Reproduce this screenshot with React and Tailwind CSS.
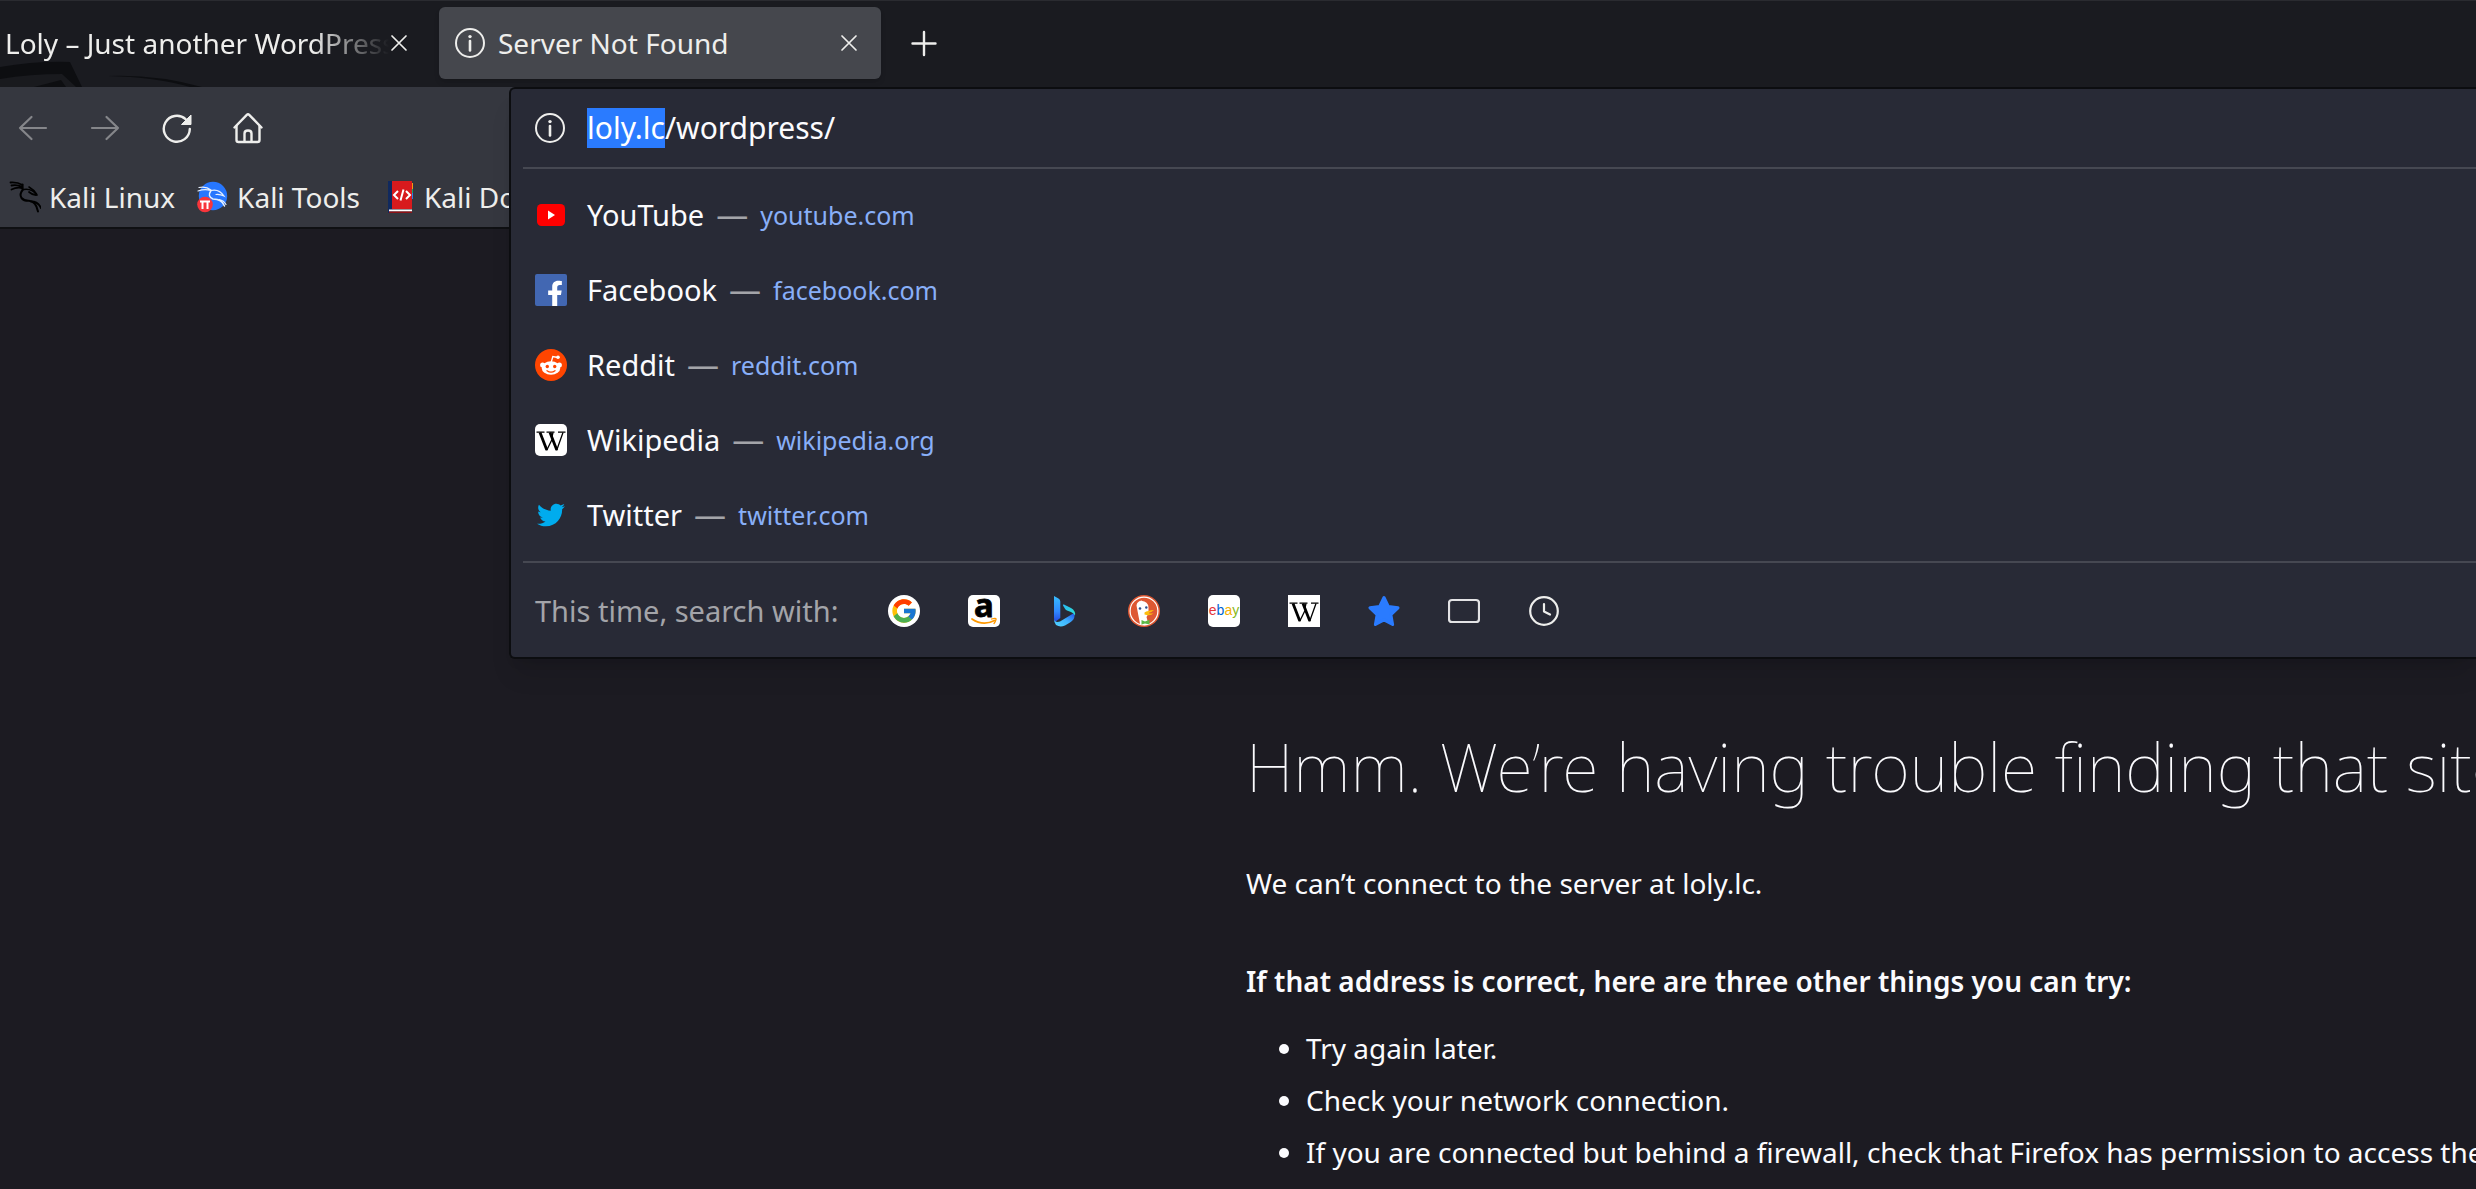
import React, { useEffect, useRef } from "react";
import { FcGoogle } from "react-icons/fc";
import { FaFacebookF, FaTwitter } from "react-icons/fa";

function InfoIcon() {
  return (
    <svg className="size-8 shrink-0" viewBox="0 0 32 32" fill="none" aria-hidden="true">
      <circle cx="16" cy="16" r="14" stroke="#eeeeec" strokeWidth="2" />
      <path d="M16 14v9.500" stroke="#eeeeec" strokeWidth="2.600" strokeLinecap="round" />
      <circle cx="16" cy="9.600" r="1.700" fill="#eeeeec" />
    </svg>
  );
}

function CloseIcon() {
  return (
    <svg className="size-5" viewBox="0 0 20 20" fill="none" stroke="#eeeeec" strokeWidth="1.700" strokeLinecap="round" aria-hidden="true">
      <path d="M3 3l14 14M17 3L3 17" />
    </svg>
  );
}

function PlusIcon() {
  return (
    <svg className="size-8" viewBox="0 0 32 32" fill="none" stroke="#eeeeec" strokeWidth="2.400" strokeLinecap="round" aria-hidden="true">
      <path d="M16 5v23M4.500 16.500h23" />
    </svg>
  );
}

function ArrowIcon({ forward }) {
  return (
    <svg className="size-8" viewBox="0 0 32 32" fill="none" stroke="#85868a" strokeWidth="2.200" strokeLinecap="round" strokeLinejoin="round" aria-hidden="true">
      {forward ? <path d="M3 16h26M17.500 5L29 16L17.500 27" /> : <path d="M29 16H3M14.500 5L3 16l11.500 11" />}
    </svg>
  );
}

function ReloadIcon() {
  return (
    <svg className="size-8" viewBox="0 0 32 32" fill="none" aria-hidden="true">
      <path d="M28.800 17a13 13 0 1 1-4.200-9.800" stroke="#eeeeec" strokeWidth="2.400" strokeLinecap="round" />
      <path d="M30 3v9.500h-9.500z" fill="#eeeeec" stroke="#eeeeec" strokeWidth="1" strokeLinejoin="round" />
    </svg>
  );
}

function HomeIcon() {
  return (
    <svg className="size-8" viewBox="0 0 32 32" fill="none" stroke="#eeeeec" strokeWidth="2.400" strokeLinecap="round" strokeLinejoin="round" aria-hidden="true">
      <path d="M1.500 15.500L13.800 2.800q1.200-1.200 2.400 0L28.500 15.500" />
      <path d="M3.500 14v14q0 2 2 2h19q2 0 2-2V14" />
      <path d="M11.500 29.500v-8q0-3 3.500-3t3.500 3v8" />
    </svg>
  );
}

function KaliLinuxIcon() {
  return (
    <svg className="size-8 shrink-0" viewBox="0 0 32 32" fill="none" stroke="#000" strokeLinecap="round" strokeLinejoin="round" aria-hidden="true">
      <path d="M1.500 1.500q7-.5 12 2.500M2.500 4.500q6-1 11 1.500M2.500 8.500q5-2.500 10.500-1.500" strokeWidth="1.800" />
      <path d="M13.500 3.500v4.500" strokeWidth="2" />
      <path d="M14 8.500q-4 4.500-1.500 8.500q2.500 3 7.500 2.800q7 .5 9 10.700" strokeWidth="2" />
      <path d="M14.500 8.500q8-1.500 13.500 5.500q-4 .5-8-3" strokeWidth="1.700" />
      <path d="M20 6q5 3 7.500 7" strokeWidth="1.500" />
      <path d="M22 20.500q7 0 10 6.500" strokeWidth="1.800" />
    </svg>
  );
}

function KaliToolsIcon() {
  return (
    <svg className="size-8 shrink-0" viewBox="0 0 32 32" aria-hidden="true">
      <circle cx="16" cy="15" r="14.200" fill="#2777ff" />
      <g fill="none" stroke="#e6f0ff" strokeLinecap="round">
        <path d="M2 6.500q7-1.500 12 2.500M1 10q7-2.500 12.500-.5" strokeWidth="1.200" />
        <path d="M14 9.500q-4 6 2 8.500q9 0 11.500 7" strokeWidth="1.500" />
        <path d="M14 9.500q8-2 13 5.500q-4-2-8-1.500M22 18.500q5 1 7 5" strokeWidth="1.200" />
      </g>
      <circle cx="8" cy="23.500" r="7.800" fill="#f8353b" />
      <path d="M3 20.500h10M5.500 20.500v7.500M10.500 20.500v7.500" stroke="#fff" strokeWidth="2" fill="none" />
    </svg>
  );
}

function KaliDocsIcon() {
  return (
    <svg className="size-8 shrink-0" viewBox="0 0 32 32" aria-hidden="true">
      <path d="M26 2h3v6h-3z" fill="#f59a13" />
      <path d="M26 8h3v4h-3z" fill="#15a56a" />
      <path d="M26 12h3v6h-3z" fill="#2b7de9" />
      <path d="M4 0h5v32H4z" fill="#10295e" />
      <path d="M8 0h20v28H8z" fill="#d81a1d" />
      <path d="M5 28.500h23v2H5z" fill="#fff" />
      <path d="M5 30.500h23V32H5z" fill="#8c1015" />
      <path d="M14 10l-4 4l4 4M22 10l4 4l-4 4M19.500 8.500l-3 11" fill="none" stroke="#fff" strokeWidth="2" />
    </svg>
  );
}

function YouTubeIcon() {
  return (
    <svg className="size-8" viewBox="0 0 32 32" aria-hidden="true">
      <rect x="2" y="5" width="28" height="22" rx="4.500" fill="#f00" />
      <path d="M13 11.500v9l7-4.500z" fill="#fff" />
    </svg>
  );
}

function FacebookIcon() {
  return (
    <span className="flex size-8 items-end justify-end overflow-hidden rounded-xs bg-[#4267b2] pr-1">
      <FaFacebookF className="-mb-px h-[27px] w-4 text-white" aria-hidden="true" />
    </span>
  );
}

function RedditIcon() {
  return (
    <svg className="size-8" viewBox="0 0 32 32" aria-hidden="true">
      <circle cx="16" cy="16" r="16" fill="#ff4500" />
      <path d="M16.300 13l1.500-5.500l5 1" fill="none" stroke="#fff" strokeWidth="1.300" />
      <circle cx="23" cy="8.200" r="1.800" fill="#fff" />
      <circle cx="7.600" cy="16" r="2.500" fill="#fff" />
      <circle cx="24.400" cy="16" r="2.500" fill="#fff" />
      <ellipse cx="16" cy="19" rx="9.300" ry="6.700" fill="#fff" />
      <circle cx="12.300" cy="17.500" r="1.700" fill="#ff4500" />
      <circle cx="19.700" cy="17.500" r="1.700" fill="#ff4500" />
      <path d="M12 21.700q4 2.800 8 0" fill="none" stroke="#ff4500" strokeWidth="1.200" strokeLinecap="round" />
    </svg>
  );
}

function WikipediaIcon({ rounded }) {
  return (
    <svg className="size-8" viewBox="0 0 32 32" aria-hidden="true">
      <rect width="32" height="32" rx={rounded ? 5 : 0} fill="#fff" />
      <g fill="none" stroke="#000">
        <path d="M1.500 8.200h8M11.500 8.200h8M23 8.200h7.500" strokeWidth="1.200" />
        <path d="M5 8.500l6.800 17.500M15 8.500l6.800 17.500" strokeWidth="2.800" />
        <path d="M11.600 26.500L17 15.500M21.600 26.500L28 8.500M16.500 14.500L18 8.500" strokeWidth="1.300" />
      </g>
    </svg>
  );
}

function TwitterIcon() {
  return (
    <span className="flex size-8 items-center justify-center">
      <FaTwitter className="size-7 text-[#00acee]" aria-hidden="true" />
    </span>
  );
}

function GoogleIcon() {
  return (
    <span className="flex size-8 items-center justify-center rounded-full bg-white">
      <FcGoogle className="size-7" aria-hidden="true" />
    </span>
  );
}

function AmazonIcon() {
  return (
    <svg className="size-8" viewBox="0 0 32 32" aria-hidden="true">
      <rect width="32" height="32" rx="5" fill="#fff" />
      <text x="16" y="22" textAnchor="middle" stroke="#000" strokeWidth="0.800" className="font-['Noto_Sans',sans-serif] text-[33px] leading-none font-bold">a</text>
      <path d="M4 24q11 7.500 22.500 1.500" fill="none" stroke="#ff9900" strokeWidth="1.800" strokeLinecap="round" />
      <path d="M23.500 24q5-1.500 4.500.5t-2 4" fill="none" stroke="#ff9900" strokeWidth="1.300" strokeLinecap="round" />
    </svg>
  );
}

function BingIcon() {
  return (
    <svg className="size-8" viewBox="0 0 32 32" aria-hidden="true">
      <defs>
        <linearGradient id="bingStem" x1="0" y1="0" x2="0" y2="1">
          <stop offset="0" stopColor="#37bdff" />
          <stop offset="0.600" stopColor="#3088ff" />
          <stop offset="1" stopColor="#2447e0" />
        </linearGradient>
        <linearGradient id="bingBase" x1="0" y1="1" x2="1" y2="0">
          <stop offset="0" stopColor="#52d6ff" />
          <stop offset="0.500" stopColor="#3fb4ff" />
          <stop offset="1" stopColor="#2052e8" />
        </linearGradient>
        <linearGradient id="bingBowl" x1="0" y1="0" x2="1" y2="1">
          <stop offset="0" stopColor="#29b6f6" />
          <stop offset="1" stopColor="#2ee6d0" />
        </linearGradient>
      </defs>
      <path d="M6 1l4.500 2.500q1.800 1 1.800 3V23L7 27q-1-2-1-4z" fill="url(#bingStem)" />
      <path d="M6 24q1 4 6 2.500L26 18q2 6-4 9.500l-5 3q-5 2-9-.5q-2-2.500-2-6z" fill="url(#bingBase)" />
      <path d="M15 10.500q-.5-1.500 1-1l7 3.500q5 3 4 7.500q-1-2.500-4-3.500l-4-1.500q-1.500-.5-2-1.800z" fill="url(#bingBowl)" />
    </svg>
  );
}

function DuckIcon() {
  return (
    <svg className="size-8" viewBox="0 0 32 32" aria-hidden="true">
      <circle cx="16" cy="16" r="16" fill="#de5833" />
      <circle cx="16" cy="16" r="13.900" fill="none" stroke="#fff" strokeWidth="1.200" />
      <path d="M8.500 10.500q.5-4.500 5-4.500q6.500 0 7 6.500v6l-2 3.500l2 7.500q-5 1.500-8.500-.5z" fill="#fff" />
      <path d="M10.500 6.500l3-1l2 1.500z" fill="#fff" />
      <circle cx="12" cy="13.500" r="1.300" fill="#2d4f8e" />
      <circle cx="18.300" cy="12.500" r="1.200" fill="#2d4f8e" />
      <path d="M16.500 17.500q3-2 9.500-2.500q-2.500 2.500-6 3q3 .8 5.500.5q-3.500 3-9 1z" fill="#fdbd0d" />
      <path d="M13.500 25l3.500 1.500l4.500-1.800v4.800l-4.500-1l-3.500 1z" fill="#5bb947" />
    </svg>
  );
}

function EbayIcon() {
  return (
    <svg className="size-8" viewBox="0 0 32 32" aria-hidden="true">
      <rect width="32" height="32" rx="5" fill="#fff" />
      <text x="16" y="20" textAnchor="middle" className="font-['Liberation_Sans',sans-serif] text-[14px]">
        <tspan fill="#e53238">e</tspan>
        <tspan fill="#0064d2">b</tspan>
        <tspan fill="#f5af02">a</tspan>
        <tspan fill="#86b817">y</tspan>
      </text>
    </svg>
  );
}

function StarIcon() {
  return (
    <svg className="size-8" viewBox="0 0 32 32" aria-hidden="true">
      <path d="M16 2.500l4.300 8.900l9.700 1.400l-7.100 6.900l1.700 9.800l-8.600-4.600l-8.600 4.600l1.700-9.800L2 12.800l9.700-1.400z" fill="#2a7bff" stroke="#2a7bff" strokeWidth="3" strokeLinejoin="round" />
    </svg>
  );
}

function TabsIcon() {
  return (
    <svg className="size-8" viewBox="0 0 32 32" fill="none" aria-hidden="true">
      <rect x="1" y="5" width="30" height="22" rx="3" stroke="#e3e3e5" strokeWidth="2.200" />
    </svg>
  );
}

function HistoryIcon() {
  return (
    <svg className="size-8" viewBox="0 0 32 32" fill="none" stroke="#eeeeec" strokeWidth="2.200" strokeLinecap="round" strokeLinejoin="round" aria-hidden="true">
      <circle cx="16" cy="16" r="13.800" />
      <path d="M16 9v7.500l6 3" />
    </svg>
  );
}

const suggestions = [
  { name: "YouTube", url: "youtube.com", icon: <YouTubeIcon /> },
  { name: "Facebook", url: "facebook.com", icon: <FacebookIcon /> },
  { name: "Reddit", url: "reddit.com", icon: <RedditIcon /> },
  { name: "Wikipedia", url: "wikipedia.org", icon: <WikipediaIcon rounded /> },
  { name: "Twitter", url: "twitter.com", icon: <TwitterIcon /> },
];

const engines = [
  { name: "Google", icon: <GoogleIcon /> },
  { name: "Amazon", icon: <AmazonIcon /> },
  { name: "Bing", icon: <BingIcon /> },
  { name: "DuckDuckGo", icon: <DuckIcon /> },
  { name: "eBay", icon: <EbayIcon /> },
  { name: "Wikipedia", icon: <WikipediaIcon /> },
  { name: "Bookmarks", icon: <StarIcon /> },
  { name: "Tabs", icon: <TabsIcon /> },
  { name: "History", icon: <HistoryIcon /> },
];

function TabStrip() {
  return (
    <header className="relative flex h-[87px] items-center border-t border-[#2a2b30] bg-[#1a1b20] pb-0.5">
      <svg className="absolute bottom-0 left-0 h-[26px] w-[210px]" viewBox="0 0 210 26" aria-hidden="true">
        <path d="M0 6Q35 0 70 1L82 26H0z" fill="#0d0e11" />
        <path d="M0 18Q30 13 62 13L76 26H0z" fill="#191a1e" />
        <path d="M34 26L61 19L66 26z" fill="#0d0e11" />
        <path d="M108 15Q155 13 202 26H190Q155 16 108 15z" fill="#0d0e11" />
      </svg>
      <div className="relative flex h-full w-[439px] items-center pl-[5px]">
        <button className="w-[384px] overflow-hidden whitespace-nowrap mask-r-from-80% mask-r-to-100% text-left">
          Loly – Just another WordPress site
        </button>
        <button className="flex size-5 items-center justify-center" aria-label="Close tab">
          <CloseIcon />
        </button>
      </div>
      <div className="flex h-[72px] w-[442px] items-center justify-between rounded-md bg-[#45474d] pr-[22px] pl-[15px] shadow-md">
        <button className="flex items-center gap-3">
          <InfoIcon />
          <span>Server Not Found</span>
        </button>
        <button className="flex size-5 items-center justify-center" aria-label="Close tab">
          <CloseIcon />
        </button>
      </div>
      <button className="ml-[27px] flex size-8 items-center justify-center" aria-label="New tab">
        <PlusIcon />
      </button>
    </header>
  );
}

function AddressPanel() {
  const input = useRef(null);
  useEffect(() => {
    input.current.focus();
    input.current.setSelectionRange(0, 7);
  }, []);
  return (
    <section className="absolute top-0 right-0 left-[509px] rounded-l-md border-2 border-r-0 border-[#0c0d10] bg-[#282a36] text-[29px] text-[#fbfbfe] shadow-xl">
      <div className="flex h-[78px] items-center gap-[21px] pl-[23px]">
        <InfoIcon />
        <input
          ref={input}
          aria-label="Address"
          defaultValue="loly.lc/wordpress/"
          spellCheck={false}
          className="flex-1 bg-transparent text-[30px] caret-transparent outline-none selection:bg-[#2a7bff] selection:text-white"
        />
      </div>
      <ul className="ml-3 border-y-2 border-[#464852] pt-2 pb-[9px]">
        {suggestions.map((s) => (
          <li key={s.name}>
            <a href={`https://${s.url}`} className="flex h-[75px] items-center pl-3">
              <span className="mr-5">{s.icon}</span>
              <span>{s.name}</span>
              <span className="mx-3 text-[32px] leading-10 text-[#a3a4a9]">—</span>
              <span className="text-[25px] text-[#88aff8]">{s.url}</span>
            </a>
          </li>
        ))}
      </ul>
      <div className="flex h-[94px] items-center pt-1 pb-0.5 pl-6">
        <span className="mr-6 w-[305px] whitespace-nowrap text-[#a3a4a9]">This time, search with:</span>
        {engines.map((e) => (
          <button key={e.name} aria-label={e.name} className="flex w-20 items-center justify-center">
            {e.icon}
          </button>
        ))}
      </div>
    </section>
  );
}

function Toolbars() {
  return (
    <div className="relative z-10 border-b-2 border-[#0f1013] bg-[#35373f]">
      <nav className="flex h-[82px] items-center gap-10 pl-[17px]">
        <button aria-label="Back"><ArrowIcon /></button>
        <button aria-label="Forward"><ArrowIcon forward /></button>
        <button aria-label="Reload"><ReloadIcon /></button>
        <button aria-label="Home"><HomeIcon /></button>
      </nav>
      <nav className="flex h-[58px] items-center gap-6 overflow-hidden pb-0.5 pl-[9px] whitespace-nowrap">
        <a href="https://www.kali.org/" className="flex items-center gap-2">
          <KaliLinuxIcon />
          <span>Kali Linux</span>
        </a>
        <a href="https://www.kali.org/tools/" className="-ml-0.5 flex items-center gap-2">
          <KaliToolsIcon />
          <span>Kali Tools</span>
        </a>
        <a href="https://www.kali.org/docs/" className="flex items-center gap-2">
          <KaliDocsIcon />
          <span>Kali Docs</span>
        </a>
      </nav>
      <AddressPanel />
    </div>
  );
}

function ErrorPage() {
  return (
    <main className="grid flex-1 grid-cols-2 items-end pb-[11px] text-[28px] leading-[52px] text-[#fbfbfe]">
      <div className="col-start-2 pl-2 whitespace-nowrap">
        <h1 className="mb-[51px] text-[67px] leading-[80px] font-thin">Hmm. We’re having trouble finding that site.</h1>
        <p className="mb-[46px]">We can’t connect to the server at loly.lc.</p>
        <p className="mb-[15px] font-semibold">If that address is correct, here are three other things you can try:</p>
        <ul className="list-disc pl-[60px]">
          <li>Try again later.</li>
          <li>Check your network connection.</li>
          <li>If you are connected but behind a firewall, check that Firefox has permission to access the Web.</li>
        </ul>
      </div>
    </main>
  );
}

export default function App() {
  return (
    <div className="flex min-h-screen flex-col overflow-hidden bg-[#1c1b22] font-['Noto_Sans',sans-serif] text-[28px] leading-10 text-[#eeeeec]">
      <TabStrip />
      <Toolbars />
      <ErrorPage />
    </div>
  );
}
